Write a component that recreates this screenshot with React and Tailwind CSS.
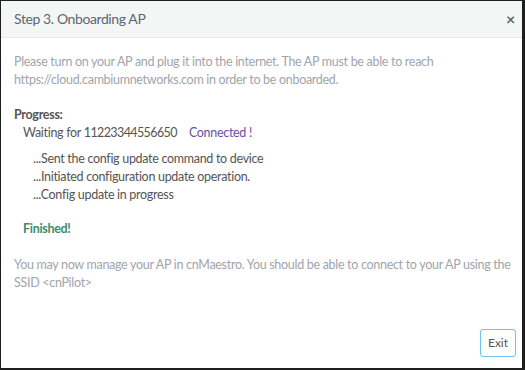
import React from 'react';

export default function App() {
    const steps = [
        '...Sent the config update command to device',
        '...Initiated configuration update operation.',
        '...Config update in progress',
    ];

    return (
        <div className="w-[525px] h-[370px] bg-white border-l border-t border-r-[3px] border-b-2 border-[#1e1e1e] flex flex-col font-['Lato',sans-serif] text-[12.5px] tracking-[-0.3px] leading-[18px]">
            {/* Header */}
            <div className="h-[37px] shrink-0 bg-[#f4f6f6] border-b border-[#e6e9e9] flex items-center justify-between pl-[13px] pr-[7px]">
                <span className="text-[14px] tracking-[-0.4px] text-[#5b6670]">Step 3. Onboarding AP</span>
                <span className="text-[16px] font-bold text-[#666] leading-none">×</span>
            </div>

            {/* Body */}
            <div className="flex-1 px-[13px] pt-[15px]">
                <p className="text-[#a0a5aa] whitespace-nowrap">
                    Please turn on your AP and plug it into the internet. The AP must be able to reach
                    <br />
                    https://cloud.cambiumnetworks.com in order to be onboarded.
                </p>

                <div className="mt-[17px] font-bold text-[#555]">Progress:</div>
                <div className="pl-[9px] text-[#555]">
                    Waiting for <span className="tracking-[-0.6px]">11223344556650</span>
                    <span className="ml-[12px] text-[#6a4fa3]">Connected !</span>
                </div>

                <div className="mt-[8px] pl-[19px] text-[#555]">
                    {steps.map((s) => (
                        <div key={s}>{s}</div>
                    ))}
                </div>

                <div className="mt-[16px] pl-[9px] font-bold text-[#3a8c6c]">Finished!</div>

                <p className="mt-[18px] text-[#a0a5aa] whitespace-nowrap">
                    You may now manage your AP in cnMaestro. You should be able to connect to your AP using the
                    <br />
                    SSID &lt;cnPilot&gt;
                </p>
            </div>

            {/* Footer */}
            <div className="flex justify-end pr-[6px] pb-[11px]">
                <button className="h-[28px] w-[36px] border-[1.5px] border-[#6cc3ec] rounded-[3px] text-[12px] tracking-normal text-[#555] bg-white">
                    Exit
                </button>
            </div>
        </div>
    );
}
